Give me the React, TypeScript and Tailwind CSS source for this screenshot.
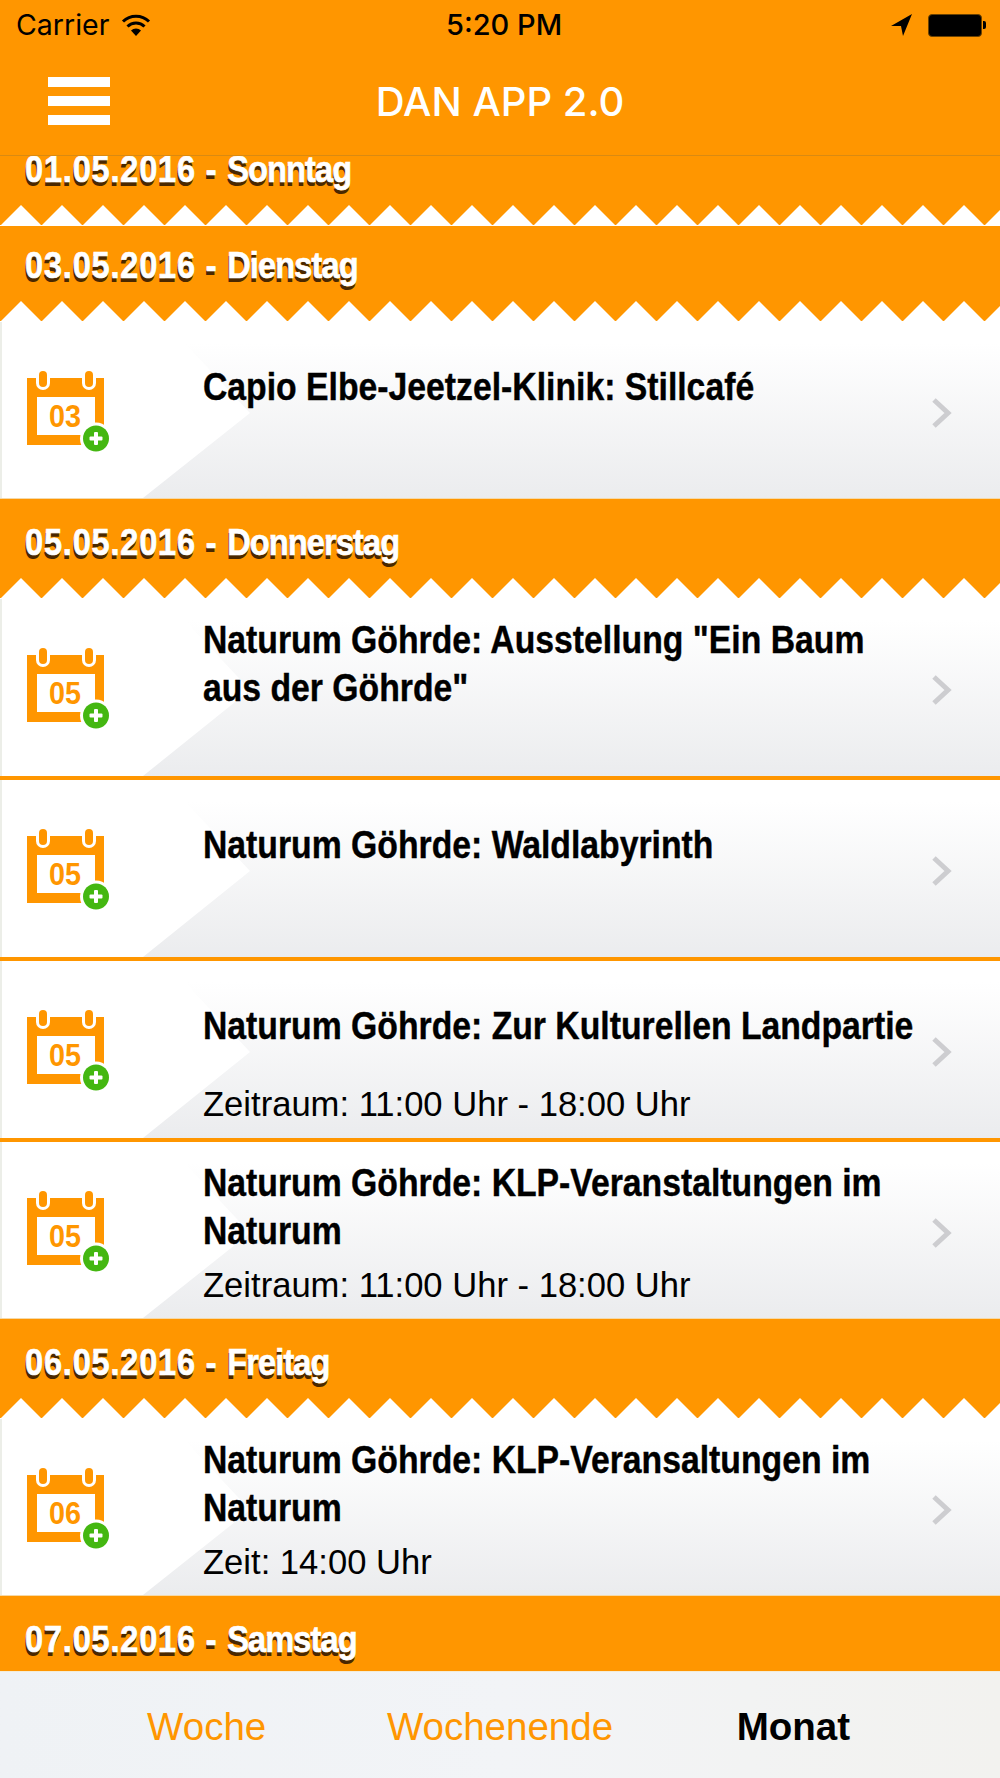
import React from 'react';

const sans = 'font-["Liberation_Sans",Arial,sans-serif]';

function Zigzag() {
  return (
    <svg className="block w-full h-[21px] shrink-0" viewBox="0 0 1000 21" preserveAspectRatio="none">
      <defs>
        <pattern id="teeth" x="0" y="0" width="41" height="21" patternUnits="userSpaceOnUse">
          <polygon points="1,20 21,0 41,20" fill="#ffffff" />
          <rect x="0" y="20" width="41" height="1" fill="#ffffff" />
        </pattern>
      </defs>
      <rect width="1000" height="21" fill="url(#teeth)" />
    </svg>
  );
}

function DayHeader({ date, weekday, kind }: { date: string; weekday: string; kind?: 'first' | 'compact' | 'last' }) {
  let box = 'h-[100px] pt-[24px]';
  if (kind === 'first') box = 'h-[100px] pt-[24px] -mt-[30px]';
  if (kind === 'compact') box = 'h-[96px] pt-[20px]';
  return (
    <div className={`${box} bg-[#ff9600] flex flex-col justify-between shrink-0`}>
      <div className="pl-[25px] h-[40px]">
        <div
          className={`${sans} origin-left scale-x-[0.88] whitespace-nowrap font-bold text-[37px] leading-[40px] text-white [-webkit-text-stroke:0.7px_#ffffff] [text-shadow:-1px_4px_0_#4a2800]`}
        >
          <span className="tracking-[0.9px]">{date} - </span>
          <span className="tracking-[-1px]">{weekday}</span>
        </div>
      </div>
      {kind !== 'last' && <Zigzag />}
    </div>
  );
}

function CalendarIcon({ day }: { day: string }) {
  return (
    <svg width="84" height="90" viewBox="0 0 84 90" className="block">
      <rect x="0" y="7" width="77" height="67" fill="#ff9600" />
      <rect x="10" y="26" width="58" height="38" fill="#ffffff" />
      <rect x="9" y="-2" width="14" height="21" rx="7" fill="#ffffff" />
      <rect x="55" y="-2" width="14" height="21" rx="7" fill="#ffffff" />
      <rect x="12" y="0" width="8" height="16" rx="4" fill="#ff9600" />
      <rect x="58" y="0" width="8" height="16" rx="4" fill="#ff9600" />
      <text
        x="38"
        y="56"
        textAnchor="middle"
        fontFamily="Liberation Sans, Arial, sans-serif"
        fontWeight="700"
        fontSize="32"
        fill="#ff9600"
        textLength="32"
        lengthAdjust="spacingAndGlyphs"
      >
        {day}
      </text>
      <circle cx="69" cy="67.5" r="16" fill="#ffffff" />
      <circle cx="69" cy="67.5" r="13" fill="#44b711" />
      <rect x="62.5" y="65.5" width="13" height="4" rx="1" fill="#ffffff" />
      <rect x="67" y="61" width="4" height="13" rx="1" fill="#ffffff" />
    </svg>
  );
}

function EventRow({
  day,
  title,
  sub,
  divider,
}: {
  day: string;
  title: string[];
  sub?: string;
  divider?: boolean;
}) {
  return (
    <div
      className={`relative shrink-0 bg-gradient-to-b from-white from-[12%] to-[#ebecee] ${
        divider ? 'h-[181px] border-b-4 border-[#ff9600]' : 'h-[177px] border-b border-[#f5d9a8]'
      }`}
    >
      <div className="absolute inset-0 bg-white [clip-path:polygon(0_0,165px_0,250px_91px,143px_100%,0_100%)]" />
      <div className="absolute left-0 top-0 bottom-0 w-[2px] bg-[#eceee8]" />
      <div className="relative flex h-[177px]">
        <div className="w-[203px] shrink-0 pl-[27px] pt-[49px]">
          <CalendarIcon day={day} />
        </div>
        <div className="flex-1 min-w-0">
          <div className="h-[130px] flex flex-col justify-center">
            {title.map((line) => (
              <div
                key={line}
                className={`${sans} origin-left scale-x-[0.865] whitespace-nowrap font-bold text-[39px] leading-[48px] text-black [-webkit-text-stroke:0.4px_#000000]`}
              >
                {line}
              </div>
            ))}
          </div>
          {sub && (
            <div className={`${sans} -mt-[5px] text-[34.6px] leading-[36px] text-black whitespace-nowrap`}>{sub}</div>
          )}
        </div>
        <div className="w-[67px] shrink-0 pt-[76px]">
          <svg width="20" height="30" viewBox="0 0 20 30" className="block -ml-[1px]">
            <polyline points="2,2 16,15 2,28" fill="none" stroke="#cdcdd0" strokeWidth="5" />
          </svg>
        </div>
      </div>
    </div>
  );
}

function StatusBar() {
  return (
    <div className="relative h-[50px] flex items-center justify-between pl-[16px] pr-[14px] text-black">
      <div className="flex items-center gap-[12px]">
        <span className="font-['Inter',sans-serif] text-[28.5px] leading-none">Carrier</span>
        <svg width="30" height="22" viewBox="0 0 30 22">
          <path d="M15 22 L10 16.5 A7.5 7.5 0 0 1 20 16.5 Z" fill="#000" />
          <path d="M6.5 12.5 A12 12 0 0 1 23.5 12.5" fill="none" stroke="#000" strokeWidth="3" />
          <path d="M2 7.5 A18.5 18.5 0 0 1 28 7.5" fill="none" stroke="#000" strokeWidth="3" />
        </svg>
      </div>
      <span className="absolute left-[446px] top-[9px] font-['Inter',sans-serif] font-medium text-[29px] leading-[32px]">
        5:20 PM
      </span>
      <div className="flex items-center gap-[15px]">
        <svg width="22" height="22" viewBox="0 0 22 22">
          <polygon points="0,12 21,0 12,22 10,12" fill="#000" />
        </svg>
        <div className="flex items-center gap-[1px]">
          <div className="w-[54px] h-[23px] rounded-[4px] bg-black border border-[#6b4200]" />
          <div className="w-[3px] h-[8px] rounded-r-[2px] bg-black" />
        </div>
      </div>
    </div>
  );
}

export default function App() {
  return (
    <div className="w-[1000px] h-[1778px] flex flex-col overflow-hidden bg-white">
      <div className="relative z-10 h-[156px] shrink-0 bg-[#ff9600] border-b border-[#d98a12]">
        <StatusBar />
        <div className="relative h-[105px]">
          <div className="absolute left-[48px] top-[27px] w-[62px] flex flex-col gap-[9px]">
            <div className="h-[10px] bg-white" />
            <div className="h-[10px] bg-white" />
            <div className="h-[10px] bg-white" />
          </div>
          <div className="pt-[33px] text-center font-['Inter',sans-serif] font-medium text-[40px] leading-[38px] text-white">
            DAN APP 2.0
          </div>
        </div>
      </div>

      <div className="flex-1 min-h-0 overflow-hidden flex flex-col">
        <DayHeader kind="first" date="01.05.2016" weekday="Sonntag" />
        <DayHeader kind="compact" date="03.05.2016" weekday="Dienstag" />
        <EventRow day="03" title={['Capio Elbe-Jeetzel-Klinik: Stillcafé']} />
        <DayHeader date="05.05.2016" weekday="Donnerstag" />
        <EventRow day="05" divider title={['Naturum Göhrde: Ausstellung "Ein Baum', 'aus der Göhrde"']} />
        <EventRow day="05" divider title={['Naturum Göhrde: Waldlabyrinth']} />
        <EventRow
          day="05"
          divider
          title={['Naturum Göhrde: Zur Kulturellen Landpartie']}
          sub="Zeitraum: 11:00 Uhr - 18:00 Uhr"
        />
        <EventRow
          day="05"
          title={['Naturum Göhrde: KLP-Veranstaltungen im', 'Naturum']}
          sub="Zeitraum: 11:00 Uhr - 18:00 Uhr"
        />
        <DayHeader date="06.05.2016" weekday="Freitag" />
        <EventRow day="06" title={['Naturum Göhrde: KLP-Veransaltungen im', 'Naturum']} sub="Zeit: 14:00 Uhr" />
        <DayHeader kind="last" date="07.05.2016" weekday="Samstag" />
      </div>

      <div
        className={`${sans} relative z-10 h-[107px] shrink-0 grid grid-cols-3 items-center px-[60px] pt-[3px] border-t border-[#f3ecd8] bg-gradient-to-r from-[#eff2f5] via-[#f2f4f7] to-[#f2f2ef] text-[38.5px]`}
      >
        <div className="text-center text-[#ff9600]">Woche</div>
        <div className="text-center text-[#ff9600]">Wochenende</div>
        <div className="text-center font-bold text-black">Monat</div>
      </div>
    </div>
  );
}
